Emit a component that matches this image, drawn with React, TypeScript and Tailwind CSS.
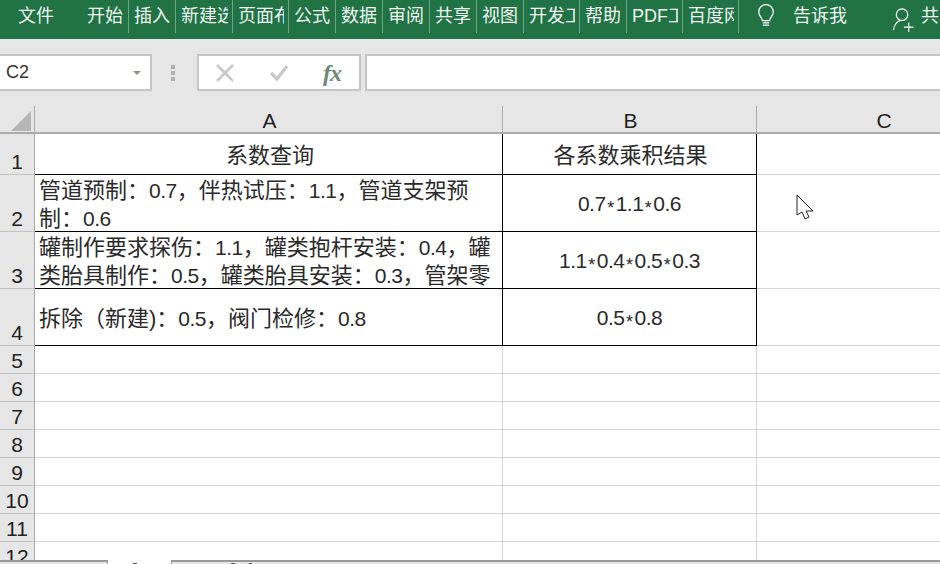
import React from 'react';

const CJK = "font-['Liberation_Sans','Noto_Sans_CJK_SC',sans-serif]";

const tabs = [
  { label: '开始', w: 'w-[47px]' },
  { label: '插入', w: 'w-[47px]' },
  { label: '新建选项卡', w: 'w-[57px]' },
  { label: '页面布局', w: 'w-[56px]' },
  { label: '公式', w: 'w-[47px]' },
  { label: '数据', w: 'w-[47px]' },
  { label: '审阅', w: 'w-[47px]' },
  { label: '共享', w: 'w-[47px]' },
  { label: '视图', w: 'w-[47px]' },
  { label: '开发工具', w: 'w-[56px]' },
  { label: '帮助', w: 'w-[47px]' },
  { label: 'PDF工具集', w: 'w-[56px]' },
  { label: '百度网盘', w: 'w-[56px]' },
];

const rows = [
  { n: '1', h: 'h-[41px]', a: '系数查询', b: '各系数乘积结果', center: true, dark: true },
  { n: '2', h: 'h-[57px]', a: '管道预制：0.7，伴热试压：1.1，管道支架预制：0.6', b: '0.7*1.1*0.6', dark: true },
  { n: '3', h: 'h-[57px]', a: '罐制作要求探伤：1.1，罐类抱杆安装：0.4，罐类胎具制作：0.5，罐类胎具安装：0.3，管架零件制作：0.6', b: '1.1*0.4*0.5*0.3', dark: true },
  { n: '4', h: 'h-[57px]', a: '拆除（新建)：0.5，阀门检修：0.8', b: '0.5*0.8', dark: true },
  { n: '5', h: 'h-[28px]' },
  { n: '6', h: 'h-[28px]' },
  { n: '7', h: 'h-[28px]' },
  { n: '8', h: 'h-[28px]' },
  { n: '9', h: 'h-[28px]' },
  { n: '10', h: 'h-[28px]' },
  { n: '11', h: 'h-[28px]' },
  { n: '12', h: 'h-[28px]' },
];

type RowData = { n: string; h: string; a?: string; b?: string; center?: boolean; dark?: boolean };

// digits in the sheet run a bit narrower than the CJK text
function CellText({ text }: { text: string }) {
  const parts = text.split(/([0-9.]+|\*)/);
  return (
    <>
      {parts.map((p, i) => {
        if (p === '*') return <span key={i} className="text-[18px] px-[1.5px] align-[-3px]">*</span>;
        if (/^[0-9.]+$/.test(p)) return <span key={i} className="text-[21px] tracking-[-0.5px]">{p}</span>;
        return <span key={i}>{p}</span>;
      })}
    </>
  );
}

function SheetRow({ row }: { row: RowData }) {
  const lineB = row.dark ? 'border-b-black' : 'border-b-[#d4d4d4]';
  const lineR = row.dark ? 'border-r-black' : 'border-r-[#d4d4d4]';
  return (
    <div className={`flex shrink-0 ${row.h}`}>
      <div className="w-[35px] shrink-0 bg-[#e6e6e6] border-b border-r border-b-[#c4c4c4] border-r-[#a8a8a8] flex items-end justify-center text-[21px] leading-[25px] text-[#222]">
        {row.n}
      </div>
      <div className={`w-[468px] shrink-0 border-b border-r ${lineB} ${lineR} flex items-center overflow-hidden`}>
        {row.a && (
          <div className={`mt-[3px] pr-[3px] w-full max-h-[56px] overflow-hidden text-[22px] leading-[28px] text-[#2a2a2a] [text-spacing-trim:space-all] ${row.center ? 'text-center pl-[6px]' : 'pl-[4px]'}`}>
            <CellText text={row.a} />
          </div>
        )}
      </div>
      <div className={`w-[254px] shrink-0 border-b border-r ${lineB} ${lineR} flex items-center justify-center text-[22px] leading-[28px] text-[#2a2a2a] ${row.center ? 'pt-[3px] pl-[2px]' : 'pt-[6px]'}`}>
        {row.b && <span><CellText text={row.b} /></span>}
      </div>
      <div className="flex-1 border-b border-b-[#d4d4d4]" />
    </div>
  );
}

export default function App() {
  return (
    <div className={`w-[940px] h-[564px] overflow-hidden flex flex-col bg-white ${CJK}`}>
      <div className="h-[39px] shrink-0 bg-[#217346] text-white/95 flex text-[18px]">
        <div className="w-[82px] pl-[18px] pt-[3px]">文件</div>
        {tabs.map(t => (
          <div key={t.label} className={`${t.w} shrink-0 h-[33px] border-r border-r-[#6fa386] pl-[5px] pt-[3px] pr-[4px] overflow-hidden whitespace-nowrap`}>
            <span className="w-full block overflow-hidden">{t.label}</span>
          </div>
        ))}
        <div className="ml-[17px] mt-[3px]">
          <svg width="20" height="26" viewBox="0 0 22 26" fill="none" stroke="white" strokeWidth="1.3">
            <path d="M7 18c0-3-4-5-4-9.500a8 8 0 0 1 16 0C19 13 15 15 15 18Z" />
            <path d="M7.500 20.500h7M7.500 23h7" />
          </svg>
        </div>
        <div className="ml-[17px] pt-[3px]">告诉我</div>
        <div className="ml-[45px] mt-[7px]">
          <svg width="22" height="25" viewBox="0 0 22 26" fill="none" stroke="white" strokeWidth="1.2">
            <circle cx="10" cy="8" r="6" />
            <path d="M1 24c1-6 4-9 7-10M12 21h10M17 16v10" />
          </svg>
        </div>
        <div className="ml-[7px] pt-[3px] whitespace-nowrap">共</div>
      </div>

      <div className="h-[67px] shrink-0 bg-[#e6e6e6] pt-[15px]">
        <div className="flex h-[37px]">
          <div className="w-[152px] shrink-0 bg-white border-2 border-l-0 border-[#c6c6c6] flex items-center justify-between pl-[6px] pr-[9px] text-[18px] text-[#333]">
            C2
            <span className="w-0 h-0 border-x-[4px] border-x-transparent border-t-[4px] border-t-[#7d9c86]" />
          </div>
          <div className="w-[45px] shrink-0 flex flex-col items-center justify-center gap-[2px] pr-[3px]">
            <span className="w-[4px] h-[4px] bg-[#b0b0b0]" />
            <span className="w-[4px] h-[4px] bg-[#b0b0b0]" />
            <span className="w-[4px] h-[4px] bg-[#b0b0b0]" />
          </div>
          <div className="w-[164px] shrink-0 bg-white border-2 border-[#c6c6c6] flex items-center">
            <svg className="ml-[17px]" width="18" height="18" viewBox="0 0 18 18" stroke="#c8c8c8" strokeWidth="2.6" fill="none">
              <path d="M1 1l16 16M17 1L1 17" />
            </svg>
            <svg className="ml-[35px]" width="20" height="18" viewBox="0 0 20 18" stroke="#c8c8c8" strokeWidth="3.2" fill="none">
              <path d="M2 9l6 6L18 2" />
            </svg>
            <span className="ml-[34px] font-['Liberation_Serif',serif] italic font-bold text-[24px] leading-none tracking-[-1px] text-[#6b8a77]">fx</span>
          </div>
          <div className="w-[4px] shrink-0" />
          <div className="flex-1 bg-white border-2 border-r-0 border-[#c6c6c6]" />
        </div>
      </div>

      <div className="h-[28px] shrink-0 bg-[#e6e6e6] flex border-b-2 border-b-[#ababab] text-[21px] text-[#222]">
        <div className="w-[35px] shrink-0 border-r border-r-[#ababab] flex items-end justify-end pr-[3px] pb-[1px]">
          <span className="w-0 h-0 border-l-[20px] border-l-transparent border-b-[20px] border-b-[#b5b5b5]" />
        </div>
        <div className="w-[468px] shrink-0 border-r border-r-[#ababab] flex items-center justify-center leading-none pt-[3px] pl-[2px]">A</div>
        <div className="w-[254px] shrink-0 border-r border-r-[#ababab] flex items-center justify-center leading-none pt-[3px] pl-[2px]">B</div>
        <div className="w-[254px] shrink-0 flex items-center justify-center leading-none pt-[3px]">C</div>
      </div>

      <div className="relative flex-1 min-h-0 overflow-hidden">
        {rows.map(r => <SheetRow key={r.n} row={r} />)}
        {/* mouse pointer */}
        <svg className="absolute left-[796px] top-[60px]" width="19" height="28" viewBox="0 0 19 28" fill="white" stroke="#222" strokeWidth="1">
          <path d="M1 1v20l5-3 3 7 4-2-3-6h7Z" />
        </svg>
      </div>

      {/* sheet tab strip, only its top edge is in frame */}
      <div className="h-[4px] shrink-0 flex bg-[#e6e6e6]">
        <div className="w-[108px] shrink-0 border-t-2 border-r border-[#999]" />
        <div className="w-[63px] shrink-0 bg-white flex justify-center items-end pr-[10px]">
          <span className="w-[4px] h-[1px] bg-[#555]" />
        </div>
        <div className="flex-1 border-t-2 border-l border-[#999] flex items-end pl-[59px] gap-[14px]">
          <span className="w-[4px] h-[1px] bg-[#555]" />
          <span className="w-[3px] h-[1px] bg-[#555]" />
        </div>
      </div>
    </div>
  );
}
